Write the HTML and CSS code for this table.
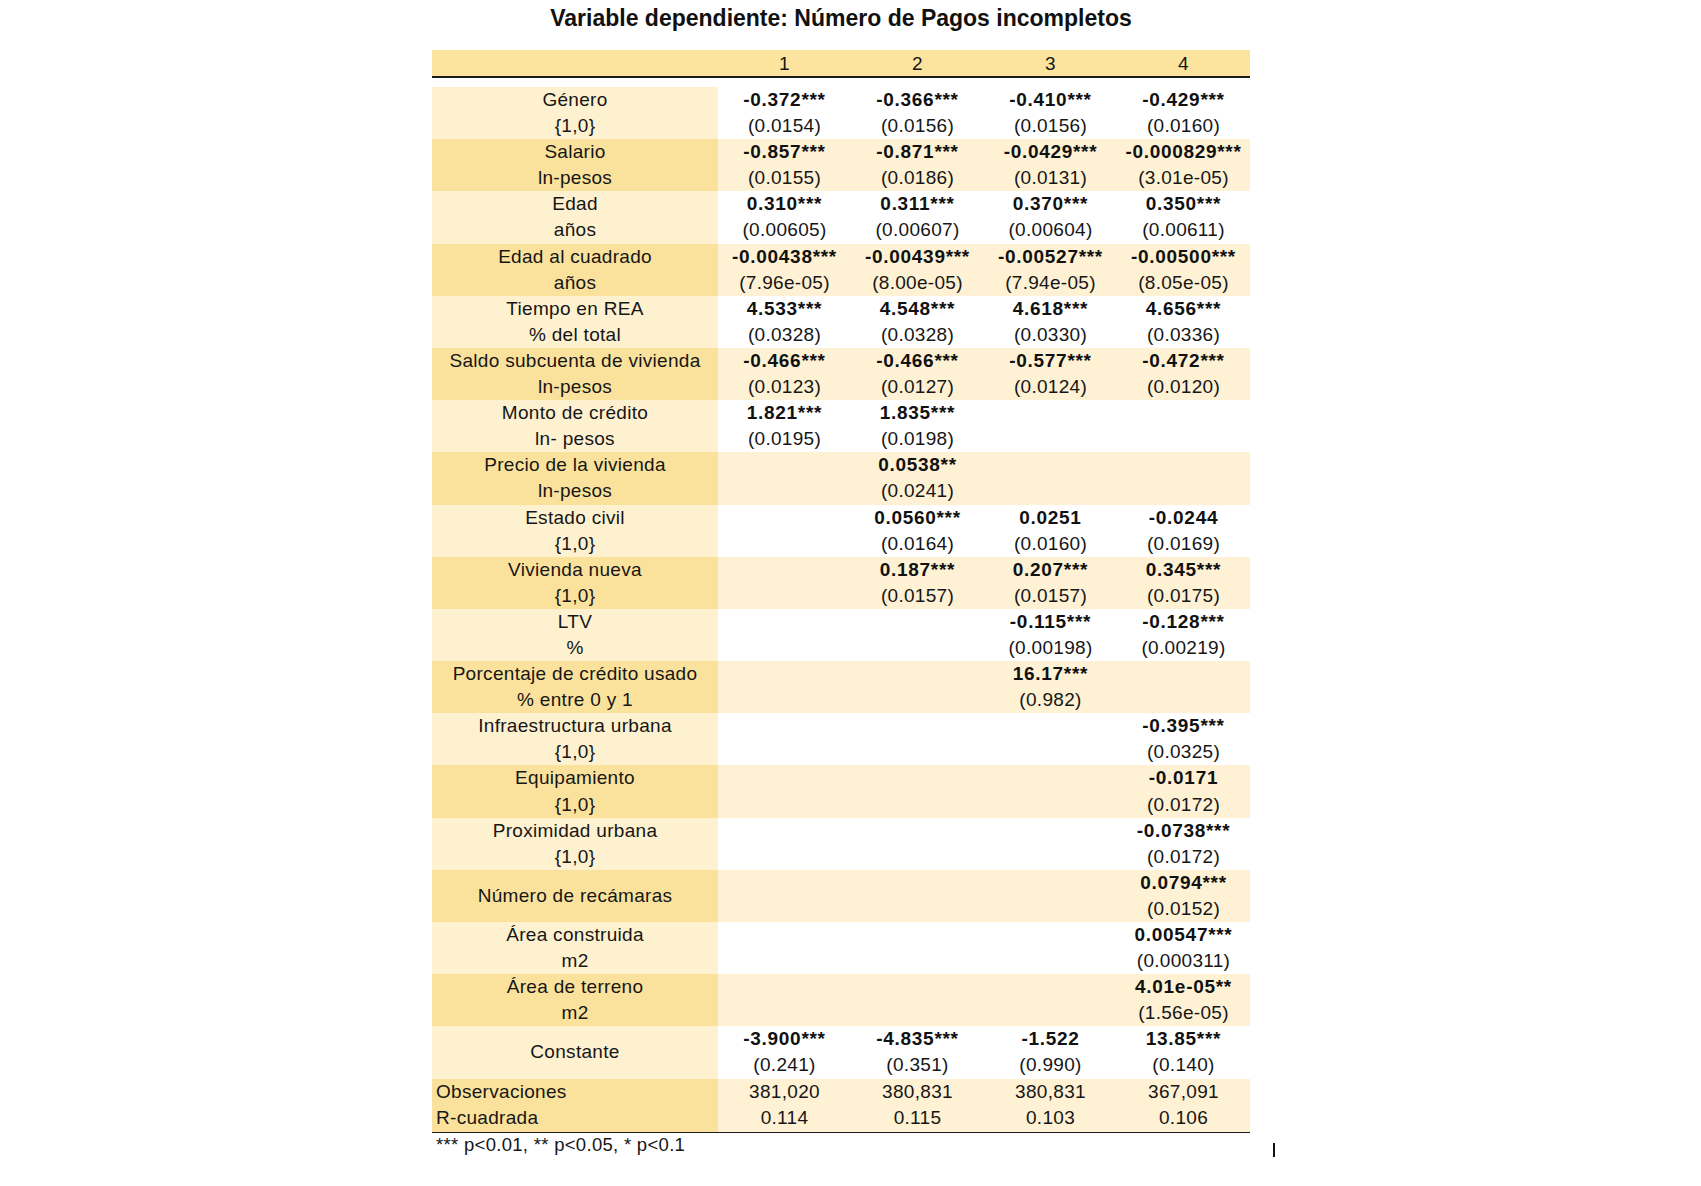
FILE: index.html
```html
<!DOCTYPE html>
<html lang="es">
<head>
<meta charset="utf-8">
<title>Variable dependiente: Número de Pagos incompletos</title>
<link rel="stylesheet" href="styles.css">
</head>
<body>
<div class="page">
  <h1 class="title">Variable dependiente: Número de Pagos incompletos</h1>
  <table class="reg">
    <colgroup>
      <col class="c-lab"><col class="c-num"><col class="c-num"><col class="c-num"><col class="c-num">
    </colgroup>
    <thead>
      <tr class="head"><th></th><th>1</th><th>2</th><th>3</th><th>4</th></tr>
    </thead>
    <tbody>
      <tr class="gap"><td colspan="5"></td></tr>
      <tr class="odd"><td class="lab">Género<br>{1,0}</td><td><b>-0.372***</b><br>(0.0154)</td><td><b>-0.366***</b><br>(0.0156)</td><td><b>-0.410***</b><br>(0.0156)</td><td><b>-0.429***</b><br>(0.0160)</td></tr>
      <tr class="even"><td class="lab">Salario<br>ln-pesos</td><td><b>-0.857***</b><br>(0.0155)</td><td><b>-0.871***</b><br>(0.0186)</td><td><b>-0.0429***</b><br>(0.0131)</td><td><b>-0.000829***</b><br>(3.01e-05)</td></tr>
      <tr class="odd"><td class="lab">Edad<br>años</td><td><b>0.310***</b><br>(0.00605)</td><td><b>0.311***</b><br>(0.00607)</td><td><b>0.370***</b><br>(0.00604)</td><td><b>0.350***</b><br>(0.00611)</td></tr>
      <tr class="even"><td class="lab">Edad al cuadrado<br>años</td><td><b>-0.00438***</b><br>(7.96e-05)</td><td><b>-0.00439***</b><br>(8.00e-05)</td><td><b>-0.00527***</b><br>(7.94e-05)</td><td><b>-0.00500***</b><br>(8.05e-05)</td></tr>
      <tr class="odd"><td class="lab">Tiempo en REA<br>% del total</td><td><b>4.533***</b><br>(0.0328)</td><td><b>4.548***</b><br>(0.0328)</td><td><b>4.618***</b><br>(0.0330)</td><td><b>4.656***</b><br>(0.0336)</td></tr>
      <tr class="even"><td class="lab">Saldo subcuenta de vivienda<br>ln-pesos</td><td><b>-0.466***</b><br>(0.0123)</td><td><b>-0.466***</b><br>(0.0127)</td><td><b>-0.577***</b><br>(0.0124)</td><td><b>-0.472***</b><br>(0.0120)</td></tr>
      <tr class="odd"><td class="lab">Monto de crédito<br>ln- pesos</td><td><b>1.821***</b><br>(0.0195)</td><td><b>1.835***</b><br>(0.0198)</td><td></td><td></td></tr>
      <tr class="even"><td class="lab">Precio de la vivienda<br>ln-pesos</td><td></td><td><b>0.0538**</b><br>(0.0241)</td><td></td><td></td></tr>
      <tr class="odd"><td class="lab">Estado civil<br>{1,0}</td><td></td><td><b>0.0560***</b><br>(0.0164)</td><td><b>0.0251</b><br>(0.0160)</td><td><b>-0.0244</b><br>(0.0169)</td></tr>
      <tr class="even"><td class="lab">Vivienda nueva<br>{1,0}</td><td></td><td><b>0.187***</b><br>(0.0157)</td><td><b>0.207***</b><br>(0.0157)</td><td><b>0.345***</b><br>(0.0175)</td></tr>
      <tr class="odd"><td class="lab">LTV<br>%</td><td></td><td></td><td><b>-0.115***</b><br>(0.00198)</td><td><b>-0.128***</b><br>(0.00219)</td></tr>
      <tr class="even"><td class="lab">Porcentaje de crédito usado<br>% entre 0 y 1</td><td></td><td></td><td><b>16.17***</b><br>(0.982)</td><td></td></tr>
      <tr class="odd"><td class="lab">Infraestructura urbana<br>{1,0}</td><td></td><td></td><td></td><td><b>-0.395***</b><br>(0.0325)</td></tr>
      <tr class="even"><td class="lab">Equipamiento<br>{1,0}</td><td></td><td></td><td></td><td><b>-0.0171</b><br>(0.0172)</td></tr>
      <tr class="odd"><td class="lab">Proximidad urbana<br>{1,0}</td><td></td><td></td><td></td><td><b>-0.0738***</b><br>(0.0172)</td></tr>
      <tr class="even"><td class="lab">Número de recámaras</td><td></td><td></td><td></td><td><b>0.0794***</b><br>(0.0152)</td></tr>
      <tr class="odd"><td class="lab">Área construida<br>m2</td><td></td><td></td><td></td><td><b>0.00547***</b><br>(0.000311)</td></tr>
      <tr class="even"><td class="lab">Área de terreno<br>m2</td><td></td><td></td><td></td><td><b>4.01e-05**</b><br>(1.56e-05)</td></tr>
      <tr class="odd"><td class="lab">Constante</td><td><b>-3.900***</b><br>(0.241)</td><td><b>-4.835***</b><br>(0.351)</td><td><b>-1.522</b><br>(0.990)</td><td><b>13.85***</b><br>(0.140)</td></tr>
      <tr class="stat"><td class="lab">Observaciones</td><td>381,020</td><td>380,831</td><td>380,831</td><td>367,091</td></tr>
      <tr class="stat last"><td class="lab">R-cuadrada</td><td>0.114</td><td>0.115</td><td>0.103</td><td>0.106</td></tr>
    </tbody>
  </table>
  <p class="note">*** p&lt;0.01, ** p&lt;0.05, * p&lt;0.1</p>
  <span class="cursor"></span>
</div>
</body>
</html>
```
FILE: styles.css
```css
html, body {
  margin: 0;
  padding: 0;
  background: #ffffff;
}

body {
  font-family: "Liberation Sans", Arial, sans-serif;
  color: #161616;
}

.page {
  position: relative;
  width: 818px;
  margin-left: 432px;
  padding-top: 5px;
}

.title {
  margin: 0;
  height: 45px;
  font-size: 23px;
  line-height: 26px;
  font-weight: 700;
  letter-spacing: 0;
  text-align: center;
  color: #111;
}

.reg {
  width: 818px;
  border-collapse: collapse;
  table-layout: fixed;
  font-size: 19px;
  letter-spacing: 0.3px;
}

.c-lab { width: 286px; }
.c-num { width: 133px; }

.reg th,
.reg td {
  padding: 0;
  text-align: center;
  vertical-align: middle;
  line-height: 26.1px;
  white-space: nowrap;
}

.reg td b {
  font-weight: 700;
  letter-spacing: 0.7px;
  color: #111;
}

.head th {
  background: #fce49f;
  font-weight: 400;
  height: 24px;
  padding-top: 2px;
  line-height: 24px;
  border-bottom: 2px solid #1a1a1a;
}

.gap td {
  height: 9px;
  background: #fff;
}

.odd td { background: #ffffff; }
.odd td.lab { background: #fef1d0; }
.even td { background: #fef1d4; }
.even td.lab { background: #fbe29c; }

.stat td {
  background: #fef1d4;
  line-height: 26.5px;
}
.stat td.lab {
  background: #fbe29c;
  text-align: left;
  padding-left: 4px;
}
.stat.last td {
  border-bottom: 1.5px solid #1a1a1a;
}

.note {
  margin: 0 0 0 4px;
  font-size: 18.5px;
  line-height: 24px;
  letter-spacing: 0.3px;
  color: #161616;
}

.cursor {
  position: absolute;
  left: 841px;
  top: 1143px;
  width: 2px;
  height: 24px;
  background: #111;
}
```
